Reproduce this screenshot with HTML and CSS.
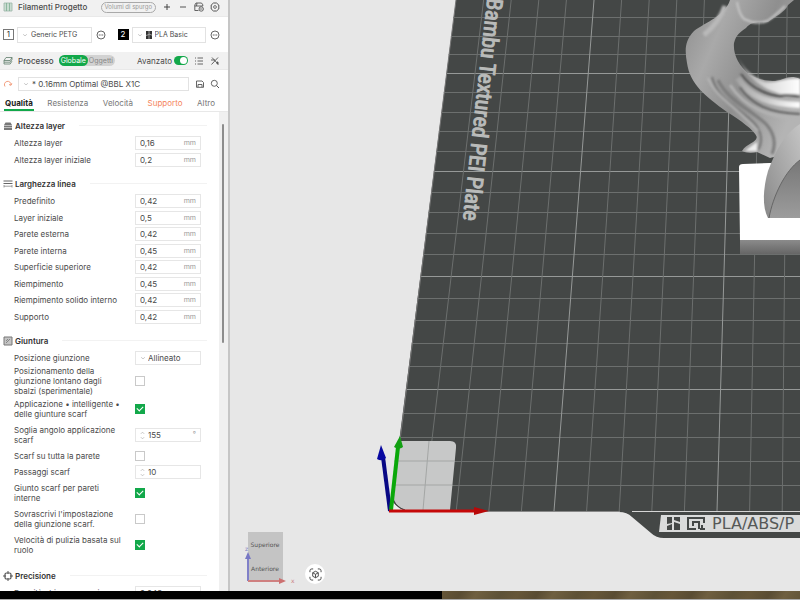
FILE: index.html
```html
<!DOCTYPE html>
<html lang="it">
<head>
<meta charset="utf-8">
<title>Bambu Studio</title>
<link rel="stylesheet" href="styles.css">
</head>
<body>
<svg width="0" height="0" class="defs" aria-hidden="true">
  <symbol id="chev" viewBox="0 0 8 8"><path d="M1.5 3 4 5.2 6.5 3" fill="none" stroke="#a5a5a5" stroke-width=".8"/></symbol>
  <symbol id="dots" viewBox="0 0 10 10"><circle cx="5" cy="5" r="4" fill="none" stroke="#555" stroke-width=".9"/><path d="M2.8 5h1M4.5 5h1M6.2 5h1" stroke="#444" stroke-width="1"/></symbol>
  <symbol id="spin" viewBox="0 0 6 12"><path d="M1 4 3 2l2 2M1 8l2 2 2-2" fill="none" stroke="#aaa" stroke-width=".8"/></symbol>
</svg>
<div class="app">
  <aside class="sidebar">
    <header class="bar">
      <svg class="icon" viewBox="0 0 10 10"><path d="M1 1h8v8H1z" fill="#c9dcd1" stroke="#9db5a8" stroke-width=".8"/><path d="M3.500 1v8M6.500 1v8" stroke="#7fae93" stroke-width=".8"/></svg>
      <h2>Filamenti Progetto</h2>
      <div class="tools">
        <button class="purge">Volumi di spurgo</button>
        <button aria-label="Aggiungi"><svg class="icon" viewBox="0 0 10 10"><path d="M5 2v6M2 5h6" stroke="#444"/></svg></button>
        <button aria-label="Rimuovi"><svg class="icon" viewBox="0 0 10 10"><path d="M2 5h6" stroke="#555"/></svg></button>
        <button aria-label="Sincronizza"><svg class="icon" viewBox="0 0 10 10"><path d="M4.500 8.500H.8V4h8V2.800L7.500 1H2L.8 3v1M3 1l-.5 3" fill="none" stroke="#555" stroke-width=".9"/><circle cx="7.200" cy="7" r="2.200" fill="none" stroke="#555" stroke-width=".9"/><path d="M6 7h2.400" stroke="#555" stroke-width=".8"/></svg></button>
        <button aria-label="Impostazioni"><svg class="icon" viewBox="0 0 10 10"><path d="M3.500 1h3L8.800 3v4L6.500 9h-3L1.200 7V3z" fill="none" stroke="#555"/><circle cx="5" cy="5" r="1.400" fill="none" stroke="#555" stroke-width=".8"/></svg></button>
      </div>
    </header>
    <div class="filaments">
      <div class="filament">
        <span class="slot">1</span>
        <label class="box"><svg class="chev"><use href="#chev"/></svg><select aria-label="Filamento 1"><option>Generic PETG</option></select></label>
        <button aria-label="Modifica filamento 1"><svg class="icon"><use href="#dots"/></svg></button>
      </div>
      <div class="filament">
        <span class="slot dark">2</span>
        <label class="box"><svg class="chev"><use href="#chev"/></svg><svg class="brand" viewBox="0 0 6 8"><path d="M0 0h6v8H0z" fill="#333"/><path d="M3 0v8M0 4.500l3-1M3 3l3 1.200" stroke="#ddd" stroke-width=".6"/></svg><select aria-label="Filamento 2"><option>PLA Basic</option></select></label>
        <button aria-label="Modifica filamento 2"><svg class="icon"><use href="#dots"/></svg></button>
      </div>
    </div>
    <header class="bar">
      <svg class="icon" viewBox="0 0 10 10"><path d="M3 1.500h6L7.200 4.500H1zM1 4.500v1.700h6.200L9 3.500v-2M1 6.300V8h6.200L9 5.200" fill="none" stroke="#5f7d6c" stroke-width=".8"/></svg>
      <h2>Processo</h2>
      <div class="scope"><button class="on">Globale</button><button>Oggetti</button></div>
      <div class="tools">
        <label class="adv" for="adv">Avanzato</label><input class="switch" id="adv" type="checkbox" checked>
        <button aria-label="Elenco"><svg class="icon" viewBox="0 0 10 10"><path d="M1 2h1M1 5h1M1 8h1M3.500 2H9M3.500 5H9M3.500 8H9" stroke="#555" stroke-width=".9"/></svg></button>
        <button aria-label="Confronta"><svg class="icon" viewBox="0 0 10 10"><path d="M2 1.500 8.500 8.500M8 1.500 1.500 8.500M1 4h4M6 7h3M7.500 5.500v3" stroke="#555" stroke-width=".9"/></svg></button>
      </div>
    </header>
    <div class="preset">
      <button aria-label="Ripristina"><svg class="icon" viewBox="0 0 10 10"><path d="M2 7.500A3.300 3.300 0 1 1 8 6M8.800 4.300 8 6.300 6 5.500" fill="none" stroke="#f0936f" stroke-width=".9"/></svg></button>
      <label class="box"><svg class="chev"><use href="#chev"/></svg><select aria-label="Profilo"><option>* 0.16mm Optimal @BBL X1C</option></select></label>
      <button aria-label="Salva"><svg class="icon" viewBox="0 0 10 10"><path d="M1.500 2h5.500L8.500 3.500V8.300h-7zM3 8V5.500h4V8" fill="none" stroke="#555" stroke-width=".9"/></svg></button>
      <button aria-label="Cerca"><svg class="icon" viewBox="0 0 10 10"><circle cx="4.300" cy="4.300" r="3" fill="none" stroke="#555" stroke-width=".9"/><path d="M6.500 6.500 9 9" stroke="#555"/></svg></button>
    </div>
    <nav class="tabs">
      <a href="#" class="current">Qualità</a><a href="#">Resistenza</a><a href="#">Velocità</a><a href="#" class="changed">Supporto</a><a href="#">Altro</a>
    </nav>
    <div class="scroll">
      <form class="settings">
        <section>
          <h3><svg class="icon" viewBox="0 0 10 10"><path d="M1 4 2.500 1.500h5L9 4v5H1z" fill="#777"/><path d="M1 4.500h8M1 6.500h8" stroke="#ddd" stroke-width=".7"/></svg>Altezza layer</h3>
          <div class="row"><label for="a1">Altezza layer</label><span class="field"><input id="a1" value="0,16"><i>mm</i></span></div>
          <div class="row"><label for="a2">Altezza layer iniziale</label><span class="field"><input id="a2" value="0,2"><i>mm</i></span></div>
        </section>
        <section>
          <h3><svg class="icon" viewBox="0 0 10 10"><path d="M.5 2h9M.5 4.500h9" stroke="#666"/><path d="M1 6v2.500M9 6v2.500M1 7.200h8" stroke="#888" stroke-width=".8"/></svg>Larghezza linea</h3>
          <div class="row"><label for="b1">Predefinito</label><span class="field"><input id="b1" value="0,42"><i>mm</i></span></div>
          <div class="row"><label for="b2">Layer iniziale</label><span class="field"><input id="b2" value="0,5"><i>mm</i></span></div>
          <div class="row"><label for="b3">Parete esterna</label><span class="field"><input id="b3" value="0,42"><i>mm</i></span></div>
          <div class="row"><label for="b4">Parete interna</label><span class="field"><input id="b4" value="0,45"><i>mm</i></span></div>
          <div class="row"><label for="b5">Superficie superiore</label><span class="field"><input id="b5" value="0,42"><i>mm</i></span></div>
          <div class="row"><label for="b6">Riempimento</label><span class="field"><input id="b6" value="0,45"><i>mm</i></span></div>
          <div class="row"><label for="b7">Riempimento solido interno</label><span class="field"><input id="b7" value="0,42"><i>mm</i></span></div>
          <div class="row"><label for="b8">Supporto</label><span class="field"><input id="b8" value="0,42"><i>mm</i></span></div>
        </section>
        <section class="mixed">
          <h3><svg class="icon" viewBox="0 0 10 10"><path d="M1 1h8v8H1z" fill="#c4c4c4" stroke="#777"/><path d="M3 7 7 3M3 5l2-2" stroke="#777" stroke-width=".8"/></svg>Giuntura</h3>
          <div class="row"><label for="c1">Posizione giunzione</label><span class="field"><svg class="chev"><use href="#chev"/></svg><select id="c1"><option>Allineato</option></select></span></div>
          <div class="row tall"><label for="c2">Posizionamento della giunzione lontano dagli sbalzi (sperimentale)</label><input type="checkbox" class="tick" id="c2"></div>
          <div class="row two"><label for="c3">Applicazione • intelligente • delle giunture scarf</label><input type="checkbox" class="tick" id="c3" checked></div>
          <div class="row two"><label for="c4">Soglia angolo applicazione scarf</label><span class="field"><svg class="spin"><use href="#spin"/></svg><input id="c4" value="155"><i>°</i></span></div>
          <div class="row"><label for="c5">Scarf su tutta la parete</label><input type="checkbox" class="tick" id="c5"></div>
          <div class="row"><label for="c6">Passaggi scarf</label><span class="field"><svg class="spin"><use href="#spin"/></svg><input id="c6" value="10"></span></div>
          <div class="row two"><label for="c7">Giunto scarf per pareti interne</label><input type="checkbox" class="tick" id="c7" checked></div>
          <div class="row two"><label for="c8">Sovrascrivi l'impostazione della giunzione scarf.</label><input type="checkbox" class="tick" id="c8"></div>
          <div class="row two"><label for="c9">Velocità di pulizia basata sul ruolo</label><input type="checkbox" class="tick" id="c9" checked></div>
        </section>
        <section>
          <h3><svg class="icon" viewBox="0 0 10 10"><rect x="2" y="2" width="6" height="6" rx="1.500" fill="none" stroke="#555" stroke-width="1.200"/><path d="M5 0v3M5 7v3M0 5h3M7 5h3" stroke="#555"/></svg>Precisione</h3>
          <div class="row"><label for="d1">Densità chiusura spazi</label><span class="field"><input id="d1" value="0,049"></span></div>
        </section>
      </form>
      <div class="track"><div class="thumb"></div></div>
    </div>
  </aside>
  <main class="viewport">
    <svg class="scene" id="scene" viewBox="230 0 570 591" preserveAspectRatio="xMinYMax slice">
      <defs>
        <linearGradient id="hair" x1="0" y1="0" x2="1" y2=".6"><stop offset="0" stop-color="#8d8d8d"/><stop offset=".3" stop-color="#a9a9a9"/><stop offset=".6" stop-color="#8f8f8f"/><stop offset="1" stop-color="#b4b4b4"/></linearGradient>
        <linearGradient id="lock" x1="0" y1="0" x2="1" y2="0"><stop offset="0" stop-color="#999"/><stop offset=".5" stop-color="#dcdcdc"/><stop offset="1" stop-color="#fff"/></linearGradient>
        <linearGradient id="strand" gradientUnits="userSpaceOnUse" x1="733" y1="68" x2="800" y2="105"><stop offset="0" stop-color="#999"/><stop offset=".6" stop-color="#ccc"/><stop offset="1" stop-color="#fff"/></linearGradient>
        <linearGradient id="arm" x1="0" y1="1" x2="1" y2="0"><stop offset="0" stop-color="#888"/><stop offset="1" stop-color="#c4c4c4"/></linearGradient>
        <linearGradient id="inner" x1="0" y1="0" x2="0" y2="1"><stop offset="0" stop-color="#777"/><stop offset="1" stop-color="#9c9c9c"/></linearGradient>
        <linearGradient id="side" x1="0" y1="0" x2="0" y2="1"><stop offset="0" stop-color="#8b8b8b"/><stop offset="1" stop-color="#666"/></linearGradient>
        <filter id="soft"><feGaussianBlur stdDeviation="1"/></filter>
      </defs>
      <path d="M456 0H800V538H664Q656 538 651 533L632 517Q627 512 619 512H390z" fill="#444746"/>
      <g id="grid" fill="none"></g>
      <path d="M456 0 391 511" stroke="#777" />
      <path d="M390 511.500H620" stroke="#888"/>
      <path d="M398 441H450Q457 441 456 448L450 510H404Q394 505 392 494z" fill="#c7c8c8"/>
      <path d="M429 441 423 510M394 461H455M393 485H452" stroke="#a4a6a5" fill="none"/>
      <path d="M391 498Q395 507 405 511H390z" fill="#eee"/><path d="M392 499Q396 507 405 510" stroke="#444" fill="none"/>
      <path d="M632 511.500H800" stroke="#d5d5d5"/>
      <path d="M661 515H800V532H659z" fill="#dadbdb"/>
      <path d="M667 517H672V523L667 524zM674 517H680V522L674 520zM667 526 672 524V530H667zM674 522 680 524V530H674z" fill="#444746"/>
      <path d="M696 529H688V518H704V523M693 526V522H699V529M702 525V530M700 529H705" fill="none" stroke="#444746" stroke-width="2"/>
      <text x="712" y="529" class="material">PLA/ABS/P</text>
      <text class="plate" text-anchor="end" transform="translate(463 220) rotate(96.3)">Bambu Textured PEI Plate</text>
      <path d="M739 167Q739 164 743 164L800 162V241H740z" fill="#fff"/>
      <path d="M740 240H800V254H740z" fill="url(#side)"/>
      <path d="M730 0C725 16 706 22 694 31C684 41 685 52 687 63C690 84 705 96 727 112C740 120 754 130 757 137C756 143 747 143 742 151C746 153 752 153 757 152L770 158L800 150V79C793 76 789 77 783 79C774 83 762 81 750 75C738 65 733 54 734 43C736 35 740 32 746 28C752 20 761 23 768 22C776 16 785 12 788 5L794 0z" fill="url(#hair)"/>
      <g filter="url(#soft)" fill="none">
        <path d="M737 54C742 69 754 77 765 82 775 84 787 77 800 79V95C792 92 786 97 775 92C757 86 744 74 737 54z" fill="url(#lock)"/>
        <path d="M741 74C752 90 771 96 781 96 788 93 793 97 800 96" stroke="#4a4a4a" stroke-width="2"/>
        <path d="M738 78C750 98 770 104 800 105" stroke="url(#strand)" stroke-width="6"/>
        <path d="M740 87C752 105 769 113 800 114" stroke="#5c5c5c" stroke-width="2"/>
        <path d="M730 85C745 108 768 117 800 119" stroke="#b4b4b4" stroke-width="3"/>
        <path d="M712 77C717 99 737 107 754 123 762 132 763 142 758 150" stroke="#727272" stroke-width="2"/>
        <path d="M718 80C728 100 748 108 766 124 773 132 777 142 772 154" stroke="#7c7c7c" stroke-width="3"/>
        <path d="M708 78C716 98 737 107 758 131" stroke="#b8b8b8" stroke-width="2"/>
        <path d="M745 151Q750 147 757 142V151z" fill="#eee"/>
        <path d="M737 2Q739 14 744 19Q756 25 767 21Q774 17 785 6" stroke="#c6c6c6" stroke-width="2"/>
        <path d="M725 6Q719 23 704 35" stroke="#b9b9b9" stroke-width="5"/>
      </g>
      <path d="M800 124C785 133 776 150 768 171C763 188 762 207 768 218H800z" fill="url(#arm)"/>
      <path d="M800 160C785 171 773 196 769 218H800z" fill="url(#inner)"/><path d="M800 160C785 171 773 196 769 218" fill="none" stroke="#666"/>
      <path d="M390 511 383 457" stroke="#080884" stroke-width="4"/><path d="M381 445 386 458Q382 462 377 459z" fill="#0707a0"/>
      <path d="M391 510 398 447" stroke="#0aa80a" stroke-width="4"/><path d="M400 436 403 447Q399 450 394 447z" fill="#12a012"/>
      <path d="M389 511H475" stroke="#c50808" stroke-width="3"/><path d="M474 507 489 511 474 515z" fill="#b90808"/>
      <path d="M248 532H283V581H248z" fill="#c4c4c4"/>
      <text x="265" y="547" class="cube" text-anchor="middle">Superiore</text>
      <text x="265" y="571" class="cube" text-anchor="middle">Anteriore</text>
      <path d="M248 581V558" stroke="#8080c8" stroke-width="2"/><path d="M248 552 251 559H245z" fill="#7777c4"/>
      <path d="M248 581H281" stroke="#cf8080" stroke-width="2"/><path d="M286 581 279 578V584z" fill="#cc7070"/>
      <text x="245" y="551" class="cube z">z</text><text x="291" y="583" class="cube x">x</text>
    </svg>
    <button class="fit" aria-label="Inquadra"><svg viewBox="0 0 14 14"><path d="M1 4.500V3Q1 1 3 1h1.500M9.500 1H11Q13 1 13 3v1.500M13 9.500V11Q13 13 11 13H9.500M4.500 13H3Q1 13 1 11V9.500M7 3.500l3 1.600v3.800L7 10.500 4 8.900V5.100zM4 5.100l3 1.700 3-1.700M7 6.800v3.700" fill="none" stroke="#444"/></svg></button>
  </main>
</div>
<footer class="strip"><div class="black"></div><div class="photo"></div></footer>
<script src="grid.js"></script>
</body>
</html>
```
FILE: styles.css
```css
* { box-sizing: border-box; }
body { margin: 0; height: 100vh; display: flex; flex-direction: column; overflow: hidden; font: 8px/10px Inter, "Noto Sans", sans-serif; color: #4a4a4a; background: #fff; }
.defs { position: absolute; }
button, input, select { font: inherit; color: inherit; margin: 0; padding: 0; border: 0; background: none; appearance: none; min-width: 0; }
button { display: flex; align-items: center; justify-content: center; flex: none; }
svg { flex: none; }
h2, h3 { margin: 0; font-size: 8px; }
.app { flex: 1; min-height: 0; display: grid; grid-template-columns: 230px minmax(0, 1fr); }
.sidebar { display: flex; flex-direction: column; min-height: 0; background: #fff; border-right: 2px solid #c6c6c6; }
.icon { width: 10px; height: 10px; display: block; }
.bar { display: flex; align-items: center; height: 18px; padding: 0 8px 0 3px; gap: 5px; background: #f1f1f1; border-bottom: 1px solid #e9e9e9; }
.bar:first-child { height: 17px; padding-bottom: 2px; }
.bar h2 { font-weight: 500; }
.tools { display: flex; align-items: center; gap: 6px; margin-left: auto; }
.purge { height: 11px; padding: 0 3px; border: 1px solid #a9a9a9; border-radius: 6px; color: #999; font-size: 6px; }
.filaments { display: grid; grid-template-columns: 1fr 1fr; height: 35px; align-items: center; padding: 0 8px 0 3px; gap: 12px; }
.filament { display: flex; align-items: center; gap: 3px; }
.slot { width: 11px; height: 11px; flex: none; border: 1px solid #777; text-align: center; line-height: 9px; color: #333; }
.slot.dark { background: #000; border-color: #000; color: #fff; }
.box { display: flex; align-items: center; height: 16px; flex: 1; min-width: 0; padding: 0 4px; gap: 3px; border: 1px solid #e2e2e2; }
.box select { flex: 1; }
.filament .box { font-size: 7px; }
.chev { width: 6px; height: 8px; }
.brand { width: 6px; height: 8px; }
.filament button { margin-left: 1px; }
.scope { display: flex; height: 11px; border-radius: 6px; background: #d2d2d2; color: #888; font-size: 7px; }
.scope button { padding: 0 2px 0 1px; }
.scope .on { background: #12a84a; color: #fff; border-radius: 6px; padding: 0 2px; }
.adv { margin-right: -4px; }
.switch { width: 14px; height: 9px; border-radius: 5px; background: #12a84a; display: flex; justify-content: flex-end; padding: 1px; }
.switch::after { content: ""; width: 7px; height: 7px; border-radius: 50%; background: #fff; }
.preset { display: flex; align-items: center; gap: 5px; height: 27px; padding: 0 8px 0 3px; }
.preset .box { height: 14px; margin-right: 1px; }
.tabs { display: flex; justify-content: space-between; height: 15px; padding: 0 12px 0 4px; border-bottom: 1px solid #e8e8e8; }
.tabs a { color: #777; text-decoration: none; line-height: 12px; height: 14px; padding: 0 1px; }
.tabs .current { color: #222; font-weight: 700; border-bottom: 2px solid #12a84a; }
.tabs .changed { color: #f5855c; }
.scroll { flex: 1; min-height: 0; display: flex; overflow: hidden; }
.settings { flex: 1; padding-top: 4px; }
.track { width: 9px; background: #f0f0f0; padding: 12px 3px 0; }
.thumb { height: 47%; width: 2px; background: #8d8d8d; border-radius: 1px; }
section { display: grid; grid-template-rows: 19px; grid-auto-rows: minmax(16px, auto); padding-bottom: 6px; }
section:nth-child(1) { height: 58px; grid-auto-rows: 1fr; }
section:nth-child(2) { height: 157px; grid-auto-rows: 1fr; }
section.mixed { padding-bottom: 8px; }
h3 { display: flex; align-items: center; gap: 2px; padding: 0 12px 0 3px; color: #333; font-weight: 600; }
h3::after { content: ""; flex: 1; height: 1px; margin-left: 12px; background: #f2f2f2; }
.row { display: grid; grid-template-columns: 109px 66px; column-gap: 12px; padding-left: 14px; align-items: center; }
.tall { height: 30px; }
.two { height: 26px; }
.field { display: flex; align-items: center; height: 14px; padding: 0 4px; border: 1px solid #e6e6e6; }
.field input, .field select { flex: 1; width: 0; height: 12px; }
.field i { font-style: normal; font-size: 7px; color: #999; }
.field .chev { margin-right: 2px; }
.spin { width: 5px; height: 11px; margin-right: 3px; }
.tick { width: 10px; height: 10px; border: 1px solid #c9c9c9; display: grid; place-items: center; }
.tick:checked { background: #12a84a; border-color: #12a84a; }
.tick:checked::after { content: ""; width: 5px; height: 3px; border: solid #fff; border-width: 0 0 1px 1px; rotate: -45deg; margin-bottom: 2px; }
.viewport { position: relative; background: #e7e7e7; min-height: 0; overflow: hidden; }
.scene { display: block; width: 100%; height: 100%; }
.plate { font: 22px "Liberation Sans Narrow", "Roboto Condensed", sans-serif; fill: #b9bbba; stroke: #b9bbba; stroke-width: 1px; }
.material { font: 16px "DejaVu Sans", sans-serif; fill: #555857; }
.cube { font: 6px "DejaVu Sans", sans-serif; fill: #555; }
.cube.x { fill: #cc8080; }
.cube.z { fill: #8080c0; }
.fit { position: absolute; left: 75px; bottom: 7px; width: 20px; height: 20px; border-radius: 50%; background: #fff; }
.fit svg { width: 13px; height: 13px; }
.strip { display: flex; height: 9px; border-bottom: 1px solid #aaa; }
.black { width: 55.2%; background: #000; }
.photo { flex: 1; background: repeating-linear-gradient(120deg, #665638, #594c33 17px, #6f5f40 31px, #5d5136 52px, #665638 67px); }
```
FILE: grid.js
```js
// Perspective grid of the build plate: every fifth line is stronger.
const grid = document.getElementById("grid");
const rows = [17, 36, 54, 73, 92, 112, 131, 151, 171, 192, 212, 233, 254, 276, 298, 320, 343, 366, 389, 413, 437, 461, 485];
const addLine = (d, strong) => {
  const p = document.createElementNS("http://www.w3.org/2000/svg", "path");
  p.setAttribute("d", d);
  p.setAttribute("stroke", strong ? "#969998" : "#6c6f6e");
  grid.append(p);
};
rows.forEach((y, i) => addLine(`M${455.5 - y * 0.127} ${y + 0.5}H800`, [3, 8, 13, 18].includes(i)));
for (let k = 1; k < 13; k++) addLine(`M${456 + 27.6 * k} 0L${391 + 32.6 * k} 511`, k % 5 === 0);
```
